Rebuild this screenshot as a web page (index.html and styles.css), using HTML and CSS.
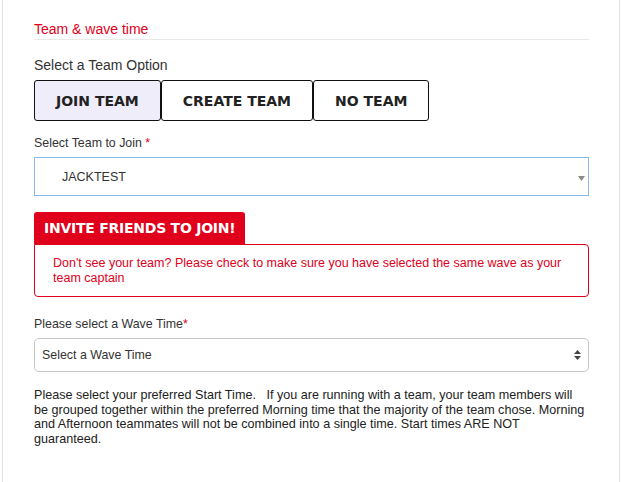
FILE: index.html
```html
<!DOCTYPE html>
<html lang="en">
<head>
<meta charset="utf-8">
<title>Team &amp; wave time</title>
<link rel="stylesheet" href="styles.css">
</head>
<body>
<div class="panel">
  <h2 class="section-title">Team &amp; wave time</h2>

  <div class="option-label">Select a Team Option</div>
  <div class="team-options">
    <button class="team-btn is-active" type="button">JOIN TEAM</button>
    <button class="team-btn" type="button">CREATE TEAM</button>
    <button class="team-btn" type="button">NO TEAM</button>
  </div>

  <label class="field-label">Select Team to Join <span class="req">*</span></label>
  <div class="select select-team">
    <span class="select-value">JACKTEST</span>
    <svg class="caret" width="7" height="5" viewBox="0 0 7 5"><path d="M0 0H7L3.5 5Z" fill="#8a8a8a"/></svg>
  </div>

  <div class="invite">
    <div class="invite-tab">INVITE FRIENDS TO JOIN!</div>
    <div class="invite-alert">Don't see your team? Please check to make sure you have selected the same wave as your team captain</div>
  </div>

  <label class="field-label wave-label">Please select a Wave Time<span class="req">*</span></label>
  <div class="select select-wave">
    <span class="select-value">Select a Wave Time</span>
    <svg class="updown" width="7" height="10" viewBox="0 0 7 10"><path d="M3.5 0L7 4H0Z M0 6H7L3.5 10Z" fill="#444"/></svg>
  </div>

  <p class="help">Please select your preferred Start Time. &nbsp;&nbsp;If you are running with a team, your team members will be grouped together within the preferred Morning time that the majority of the team chose. Morning and Afternoon teammates will not be combined into a single time. Start times ARE NOT guaranteed.</p>
</div>
</body>
</html>
```

FILE: styles.css
```css
html, body {
  margin: 0;
  padding: 0;
  background: #ffffff;
}

body {
  font-family: "Liberation Sans", Arial, Helvetica, sans-serif;
  color: #333333;
}

.panel {
  box-sizing: border-box;
  width: 618px;
  min-height: 482px;
  margin-left: 2px;
  padding: 21px 30px 0 31px;
  border-left: 1px solid #e3e3e3;
  border-right: 1px solid #e3e3e3;
}

.section-title {
  margin: 0;
  padding-bottom: 2px;
  font-size: 14px;
  line-height: 16px;
  font-weight: normal;
  color: #e0001b;
  border-bottom: 1px solid #e9e9e9;
}

.option-label {
  margin-top: 17px;
  font-size: 14px;
  line-height: 16px;
  color: #333333;
}

.team-options {
  display: flex;
  margin-top: 7px;
}

.team-btn {
  height: 41px;
  margin: 0;
  padding: 0 21px;
  border: 1px solid #111111;
  border-radius: 3px;
  background: #ffffff;
  font-family: "DejaVu Sans", sans-serif;
  font-weight: bold;
  font-size: 14px;
  color: #222222;
  cursor: pointer;
}

.team-btn.is-active {
  background: #eeedf9;
}

.field-label {
  display: block;
  margin-top: 15px;
  font-size: 12.4px;
  line-height: 15px;
  color: #333333;
}

.req {
  color: #e0001b;
}

.select {
  box-sizing: border-box;
  display: flex;
  align-items: center;
  justify-content: space-between;
  width: 555px;
  margin-top: 6px;
  font-size: 12.5px;
  color: #333333;
}

.select-team {
  height: 39px;
  padding: 0 3px 0 27px;
  border: 1px solid #86b9ec;
}

.caret {
  display: block;
  margin-top: 4px;
}

.invite {
  margin-top: 16px;
}

.invite-tab {
  display: inline-block;
  height: 32px;
  padding: 0 10px;
  line-height: 32px;
  background: #e0001b;
  color: #ffffff;
  font-family: "DejaVu Sans", sans-serif;
  font-weight: bold;
  font-size: 14px;
  letter-spacing: -0.25px;
  border-radius: 3px 3px 0 0;
  vertical-align: top;
}

.invite-alert {
  box-sizing: border-box;
  width: 555px;
  padding: 11px 18px 10px;
  border: 1px solid #e0001b;
  border-radius: 0 4px 4px 4px;
  font-size: 12.5px;
  line-height: 15px;
  color: #e0001b;
}

.wave-label {
  margin-top: 20px;
}

.select-wave {
  height: 34px;
  margin-top: 6px;
  padding: 0 7px 0 7px;
  border: 1px solid #c6c6c6;
  border-radius: 5px;
  font-size: 12.4px;
}

.updown {
  display: block;
}

.help {
  margin: 16px 0 0;
  font-size: 12.6px;
  line-height: 14.7px;
  color: #222222;
}
```
